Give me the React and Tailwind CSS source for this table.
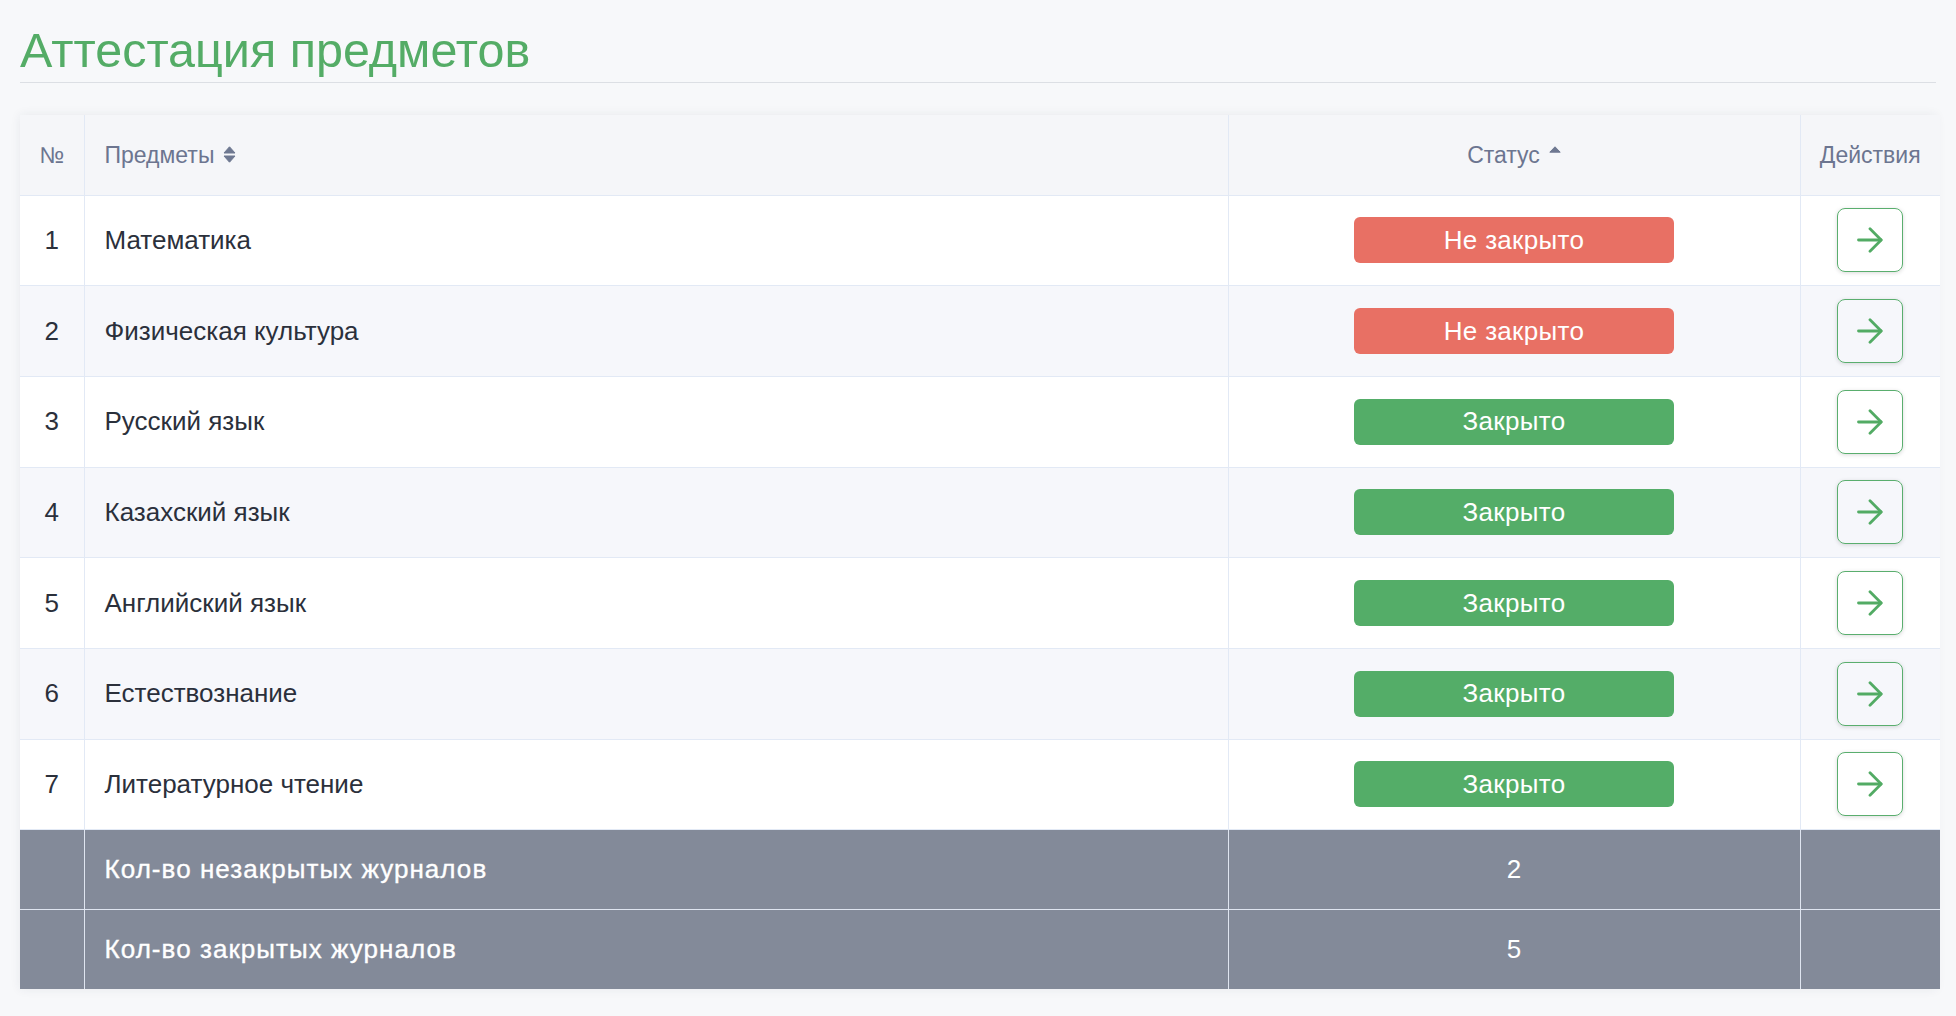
import React from "react";

const rows = [
  [1, "Математика", false],
  [2, "Физическая культура", false],
  [3, "Русский язык", true],
  [4, "Казахский язык", true],
  [5, "Английский язык", true],
  [6, "Естествознание", true],
  [7, "Литературное чтение", true],
];

function SortBoth() {
  return (
    <svg width="13" height="17" viewBox="0 0 13 17" className="ml-[9px] inline-block">
      <path d="M1 7 L6.5 0.8 L12 7 Z" fill="#6e7891" stroke="#6e7891" strokeWidth="1" strokeLinejoin="round" />
      <path d="M1 10 L6.5 16.2 L12 10 Z" fill="#6e7891" stroke="#6e7891" strokeWidth="1" strokeLinejoin="round" />
    </svg>
  );
}

function SortUp() {
  return (
    <svg width="12" height="7" viewBox="0 0 12 7" className="ml-[9px] mt-[2px] inline-block">
      <path d="M0.8 6.2 L6 0.8 L11.2 6.2 Z" fill="#6e7891" stroke="#6e7891" strokeWidth="1" strokeLinejoin="round" />
    </svg>
  );
}

function Arrow() {
  return (
    <svg width="26" height="26" viewBox="0 0 26 26" fill="none">
      <path d="M1.5 13 H24" stroke="#52ab64" strokeWidth="2.8" strokeLinecap="round" />
      <path d="M13 1.8 L24.2 13 L13 24.2" stroke="#52ab64" strokeWidth="2.8" strokeLinecap="round" strokeLinejoin="round" />
    </svg>
  );
}

export default function App() {
  return (
    <div className="min-h-[1016px] w-full bg-[#f7f8fa] px-[20px] font-['Liberation_Sans',Arial,sans-serif]">
      <h1 className="pt-[26px] pb-[8px] border-b border-[#dcdfe4] text-[48.5px] leading-[48px] text-[#54ac66] font-normal">
        Аттестация предметов
      </h1>
      <div className="mt-[32px] shadow-[0_0_10px_rgba(40,50,80,0.08)]">
        <table className="w-full table-fixed border-collapse">
          <colgroup>
            <col className="w-[64px]" />
            <col className="w-[1144px]" />
            <col className="w-[572px]" />
            <col className="w-[140px]" />
          </colgroup>
          <thead>
            <tr className="h-[80px] bg-[#f5f6f9] text-[23px] text-[#6c7590]">
              <th className="border-r border-b border-[#e2e9f5] text-center font-normal">№</th>
              <th className="border-r border-b border-[#e2e9f5] pl-[20px] text-left font-normal">
                <span className="inline-flex items-center">
                  Предметы
                  <SortBoth />
                </span>
              </th>
              <th className="border-r border-b border-[#e2e9f5] text-center font-normal">
                <span className="inline-flex items-start leading-none">
                  Статус
                  <SortUp />
                </span>
              </th>
              <th className="border-b border-[#e2e9f5] text-center font-normal">Действия</th>
            </tr>
          </thead>
          <tbody className="text-[26px] text-[#2b303b]">
            {rows.map(([n, name, closed]) => (
              <tr key={n} className={n % 2 === 0 ? "h-[90.7px] bg-[#f6f7fb]" : "h-[90.7px] bg-white"}>
                <td className="border-r border-b border-[#e2e9f5] text-center">{n}</td>
                <td className="border-r border-b border-[#e2e9f5] pl-[20px]">{name}</td>
                <td className="border-r border-b border-[#e2e9f5] text-center">
                  <span
                    className={
                      closed
                        ? "inline-flex h-[46px] w-[320px] items-center justify-center rounded-[6px] bg-[#54ad68] text-white tracking-[0.3px]"
                        : "inline-flex h-[46px] w-[320px] items-center justify-center rounded-[6px] bg-[#e87064] text-white tracking-[0.3px]"
                    }
                  >
                    {closed ? "Закрыто" : "Не закрыто"}
                  </span>
                </td>
                <td className="border-b border-[#e2e9f5] text-center">
                  <button className="inline-flex h-[64px] w-[66px] items-center justify-center rounded-[8px] border border-[#5aae6e] shadow-[0_1px_4px_rgba(0,0,0,0.15)] align-middle">
                    <Arrow />
                  </button>
                </td>
              </tr>
            ))}
          </tbody>
          <tfoot className="bg-[#838a99] text-[26px] text-white">
            <tr className="h-[79.5px]">
              <td className="border-r border-b border-[#dfe5f0]"></td>
              <td className="border-r border-b border-[#dfe5f0] pl-[20px] tracking-[1.05px] [-webkit-text-stroke:0.35px_white]">
                Кол-во незакрытых журналов
              </td>
              <td className="border-r border-b border-[#dfe5f0] text-center">2</td>
              <td className="border-b border-[#dfe5f0]"></td>
            </tr>
            <tr className="h-[79.5px]">
              <td className="border-r border-[#dfe5f0]"></td>
              <td className="border-r border-[#dfe5f0] pl-[20px] tracking-[1.05px] [-webkit-text-stroke:0.35px_white]">
                Кол-во закрытых журналов
              </td>
              <td className="border-r border-[#dfe5f0] text-center">5</td>
              <td></td>
            </tr>
          </tfoot>
        </table>
      </div>
    </div>
  );
}
